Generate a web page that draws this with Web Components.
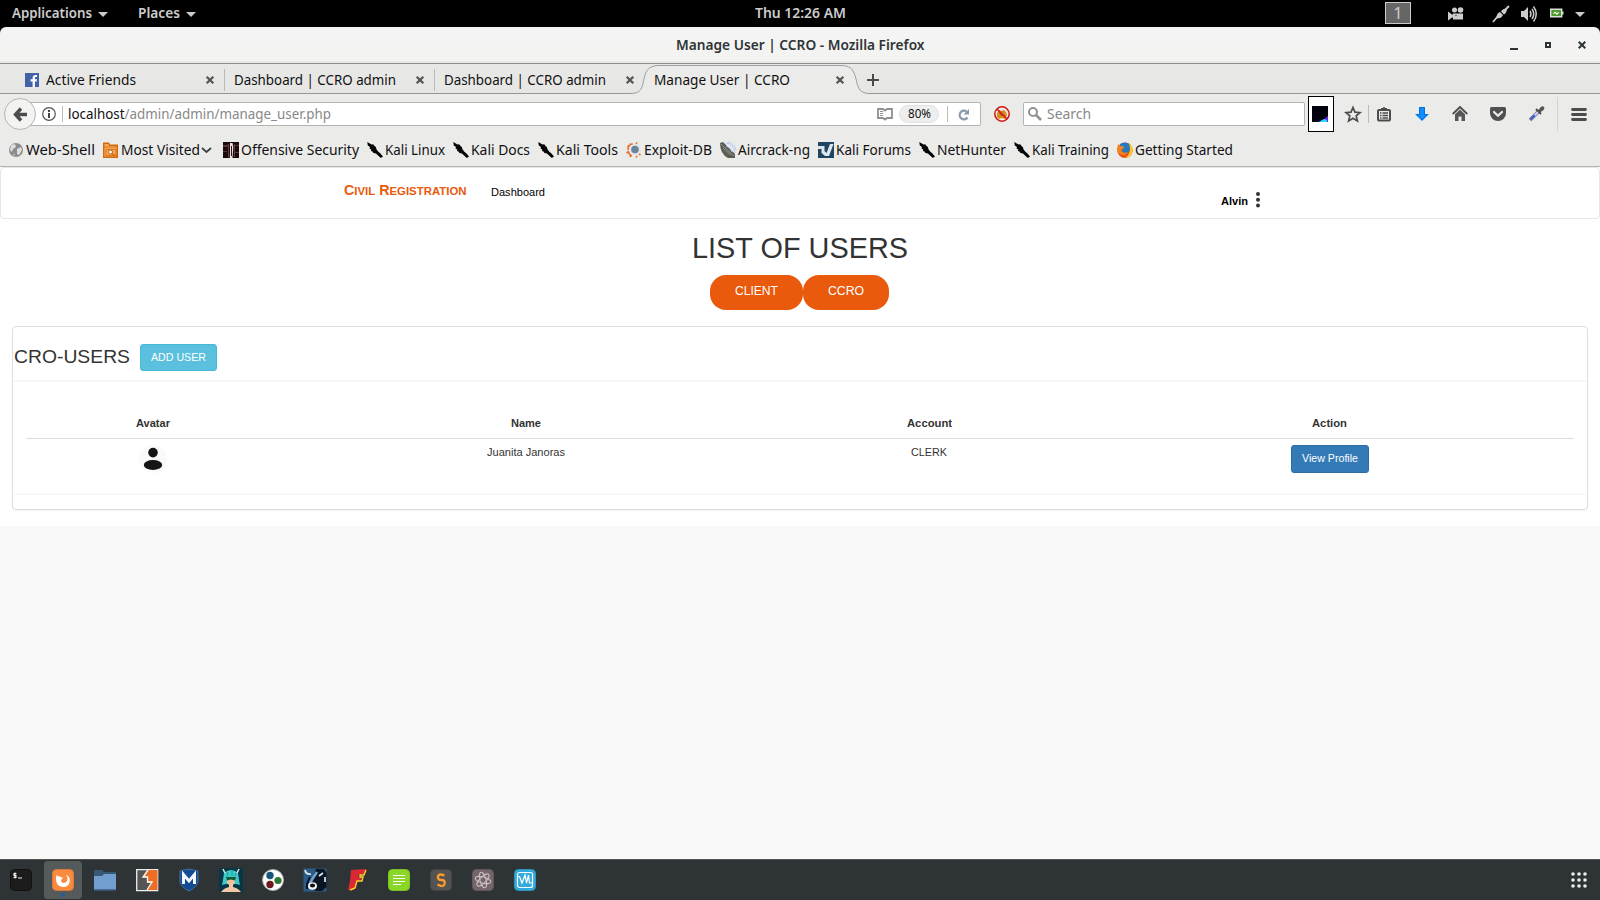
<!DOCTYPE html>
<html lang="en">
<head>
<meta charset="utf-8">
<title>Manage User | CCRO</title>
<style>
html,body{margin:0;height:100%;overflow:hidden;background:#000}
body{font-family:"Noto Sans","Open Sans",sans-serif;font-size:14px}
</style>
</head>
<body>
<desk-top></desk-top>
<script>
const ICONS = {
  down: '<path d="M0 4h10L5 9z" fill="#ccc"/>',
  camera: '<circle cx="6.500" cy="3" r="2.500" fill="#ccc"/><circle cx="12.500" cy="3" r="2.800" fill="#ccc"/><path d="M0 4.500 4 7.500h1V6.500h10v6H5V10.500H4L0 13.500z" fill="#ccc"/><circle cx="8" cy="8.500" r=".8" fill="#555"/>',
  plug: '<path d="M0 16 5 10 M16 0 12 4" stroke="#ccc" stroke-width="1.800"/><path d="M3.500 12.500c0-4 1-5.500 3.500-6.500l3 3c-1 2.500-3 3.500-6.500 3.500z M8 5.500l3 3c2-1 2.800-3 3-6-3 .2-5 1-6 3z" fill="#ccc"/>',
  volume: '<path d="M0 5h3l4-4v14l-4-4H0z" fill="#ccc"/><path d="M9 5q2 3 0 6M11 3q3.500 5 0 10M12.500 .5q5.500 7.500 0 15" fill="none" stroke="#ccc" stroke-width="1.500"/>',
  battery: '<path d="M.7 1.200h11v7.600H.7z" fill="#4e9a2a" stroke="#ddd" stroke-width="1.400"/><path d="M12 3.500h1.500v3H12z" fill="#ddd"/><path d="m2.500 5.500 3-2 1 1.500 3-1-2.500 3-1.500-1.500z" fill="#fff"/>',
  min: '<path d="M0 8h8v2H0z" fill="#2e3436"/>',
  max: '<path d="M1 1h4v4H1z" fill="none" stroke="#2e3436" stroke-width="2"/>',
  close: '<path d="m.7.700 6.600 6.600M7.300.700.700 7.300" stroke="#2e3436" stroke-width="2"/>',
  tabclose: '<path d="m.7.700 6.600 6.600M7.300.700.700 7.300" stroke="#555753" stroke-width="2.300"/>',
  plus: '<path d="M6 0v12M0 6h12" stroke="#4b4b4b" stroke-width="2"/>',
  facebook: '<path d="M0 0h14v14H0z" fill="#4261a6"/><path d="M7.600 14V8.500H5.500V6.300h2.100V5c0-2 1.200-3 3-3H12v2.100h-1.100c-.7 0-1 .4-1 1v1.200H12l-.3 2.200H9.900V14z" fill="#fff"/>',
  back: '<path d="M8 1.500 2.500 7.500 8 13.500M3 7.500h11" fill="none" stroke="#4c4c4c" stroke-width="3.400"/>',
  info: '<circle cx="7" cy="7" r="6.300" fill="none" stroke="#555" stroke-width="1.200"/><path d="M6 3h2v2H6zM6 6h2v5H6z" fill="#444"/>',
  reader: '<path d="M1 1h5l2 1.500L10 1h5v9h-5l-2 1.500L6 10H1z" fill="none" stroke="#8f8f8f" stroke-width="1.800"/><path d="M3 3.500h3M3 5.500h3M3 7.500h3" stroke="#8f8f8f"/>',
  reload: '<path d="M9.500 8.500A4.300 4.300 0 1 1 8.500 2.500" fill="none" stroke="#8a9aab" stroke-width="2.300"/><path d="M11 0v5.500H5.500z" fill="#8a9aab"/>',
  blocked: '<path d="M3 7l2-3 2 1 3-1 2 2 1 3-2 4-3-1-3 1-2-2z" fill="#df8a16"/><path d="m5 5 2 4 4 1" stroke="#7c4d10" fill="none"/><circle cx="8" cy="8" r="7.200" fill="none" stroke="#d01515" stroke-width="1.500"/><path d="m3 3 10 10" stroke="#d01515" stroke-width="1.500"/>',
  search: '<circle cx="5" cy="5" r="4" fill="none" stroke="#929292" stroke-width="2"/><path d="m8 8 5 5" stroke="#929292" stroke-width="2.600"/>',
  space: '<path d="M0 0h16v16H0z" fill="#02020f"/><path d="M16 10v6H6l6-3z" fill="#6d22e8"/><path d="m7 16 5-3 3 1v2z" fill="#21dfff"/>',
  star: '<path d="m8 1.500 2 4.600 5 .5-3.800 3.300L12.400 15 8 12.300 3.600 15l1.200-5.100L1 6.600l5-.5z" fill="none" stroke="#4c4c4c" stroke-width="1.700"/>',
  clip: '<rect x="1" y="3" width="12" height="10.500" rx="1" fill="none" stroke="#4c4c4c" stroke-width="2"/><path d="M4 3V1h2Q7-1.500 8 1h2v2z" fill="#4c4c4c"/><path d="M3 6h1.500M3 8.500h1.500M3 11h1.500M5.500 6H11M5.500 8.500H11M5.500 11H11" stroke="#4c4c4c" stroke-width="1.300"/>',
  download: '<path d="M4 0h6v7h4l-7 7-7-7h4z" fill="#0f8cff"/><path d="M4.500.5h5v7h3L7 13 1.500 7.500h3z" fill="none" stroke="#0b70d4"/>',
  home: '<path d="M.7 8 8 1l7.300 7" fill="none" stroke="#4c4c4c" stroke-width="1.800"/><path d="M3 8.300 8 3.600l5 4.700V15H9.500v-4.500h-3V15H3z" fill="#565656"/>',
  pocket: '<path d="M1.500 0h13Q16 0 16 1.500V6A8 8 0 0 1 0 6V1.500Q0 0 1.500 0z" fill="#505050"/><path d="m4 5 4 3.800L12 5" fill="none" stroke="#ebebea" stroke-width="2.200" stroke-linecap="round"/>',
  dropper: '<path d="m1 14 8-8" stroke="#777" stroke-width="3.500"/><path d="m2 13 7-7" stroke="#c9d8ff" stroke-width="2"/><path d="m1.700 13.300 4-4" stroke="#3857d6" stroke-width="2"/><path d="m7 3 5 5" stroke="#4a4a4a" stroke-width="2"/><path d="M8.500 5 12 .8q2-1.200 3 .2t-.5 3L10.500 7z" fill="#555"/>',
  menu: '<path d="M1.500 1.500h13M1.500 6.500h13M1.500 11.500h13" stroke="#4c4c4c" stroke-width="2.800" stroke-linecap="round"/>',
  globe: '<circle cx="8" cy="8" r="7" fill="#8b8b8b"/><path d="m3 3 4-1 1 3-3 2-1 3-2-2zM9 7l4-2 1 3-3 5-2-1zM5 11l2 2-1 1z" fill="#dedede"/>',
  folder: '<path d="M.7 1.200h5l1 2h7.600v12H.7z" fill="#f5a85a" stroke="#cf6a0d" stroke-width="1.400"/><path d="M.7 5h13.600M3 7.500h10v6H3z" fill="none" stroke="#d8781d"/><circle cx="7.500" cy="10" r="2" fill="#fff" stroke="#c9640a"/><path d="m9 11.500 3 2.500" stroke="#c9640a" stroke-width="1.300"/>',
  chevron: '<path d="m1 3 4.500 4L10 3" fill="none" stroke="#3c4348" stroke-width="1.800"/>',
  offsec: '<path d="M0 0h16v16H0z" fill="#1b0b0c"/><path d="M0 3h5v2H0zM11 3h5v1h-5zM0 9h4v1H0zM12 10h4v1h-4z" fill="#5b3032"/><path d="M7 1h2.500l.8 4-.8 11H6.800l.2-6z" fill="#e8e2e2"/><path d="M8 4h1v10H8z" fill="#2a1617"/><path d="M5 2h1v13H5zM11 2h1v13h-1z" fill="#6b3a3c"/>',
  kali: '<path d="M.3 0 4.500 2.500 6.200 2.300 7.500 4l1.300 1 .8 2.500 2 2.500 1.400 1 3 3.500L13.800 16 10.500 13 9 11.500 6.500 11 5.500 9.500 4 9l.3-1.500L2.500 6.500 3 5 .8 3.500z" fill="#050505"/>',
  exploit: '<path d="M3 5 1.500 4M5 3 4 1.500M10 2l1-1.500M2 10l-1.500 1M5 13l-1 2M13 12l1.500 1M10 14l1 1.500M2 8Q2 2 7 2M2 9q1 4 4 5" stroke="#ee6b2a" fill="none" stroke-width="1.600"/><circle cx="9" cy="7.500" r="5.500" fill="#dbe6ee"/><circle cx="9" cy="7.500" r="3.800" fill="#6b8496"/>',
  aircrack: '<path d="M0 1 3 0l12 12v4H8Q0 12 0 1z" fill="#5b5d55"/><path d="m1 2 13 12M3 6l8 7" stroke="#92938b"/><path d="M6 1q8 1 9 10M8 0q7 2 8 8M6 4q5 1 6 6" fill="none" stroke="#b8caf5"/>',
  forum: '<path d="M0 0h16v16H0z" fill="#1f4560"/><path d="M0 4h6.500v5l2 2L12 2h3.500L11 14H7L3.500 11V7H0z" fill="#dce6ec"/>',
  firefox: '<circle cx="8" cy="8.300" r="7.700" fill="#e8521c"/><path d="M12 1q4 3 3.700 7.500Q15 15 8 16q5-3 5-9z" fill="#ffc928"/><path d="M3 2Q8-1 12 2l1 5q-1 5-6 4L3 6z" fill="#237bc4"/><path d="m0 7 1-5 2 2h3l1 2-3 2q1 4 7 2-3 5-8 2-3-1-3-5z" fill="#f58220"/>',
  avatar: '<circle cx="14" cy="14" r="14" fill="#fafafa"/><circle cx="14" cy="7.600" r="4.800" fill="#151515"/><ellipse cx="14" cy="20" rx="9.200" ry="5" fill="#151515"/>',
  dots: '<g fill="#333"><circle cx="2" cy="2" r="2"/><circle cx="2" cy="7.800" r="2"/><circle cx="2" cy="13.500" r="2"/></g>',
  term: '<rect x=".5" y=".5" width="21" height="21" rx="4" fill="#1c1c1c" stroke="#111"/><path d="M6.500 4.500H4v2h2v2H3.500M5 3.500v6M8 9h4" fill="none" stroke="#eee" stroke-width="1.100"/>',
  ff: '<rect x=".5" y=".5" width="21" height="21" rx="4" fill="#f98b40" stroke="#e27830"/><path d="M4.500 6q1.500 1.500 3.500 1.500l3 1.500-2 2q0 3 3 3 4-1 3.500-5L14 5.500q4 2 3.800 6.500-.8 6-6.800 6-7-.5-7-8z" fill="#fff"/>',
  files: '<path d="M0 1h8l2 2h12v6H0z" fill="#375873"/><path d="M0 7h8l2-2h12v16H0z" fill="#729dcf"/><path d="M0 20h22v1.500H0z" fill="#486b9a"/>',
  burp: '<path d="M.7.700h21v21H.7z" fill="#555" stroke="#eee" stroke-width="1.300"/><path d="M12 1h9.500v20H11l5-7h-5l1-5-5-1z" fill="#ee6d24"/><path d="M12 1 7 8h4.500v5H16l-5 8" fill="none" stroke="#fff" stroke-width="1.300"/>',
  msf: '<path d="M2 2q4-1 9-2 5 1 9 2v11q-1 5-9 9-8-4-9-9z" fill="#134a91" stroke="#3e739f"/><path d="M5.500 15V5.500L11 12l5.500-6.500V15" fill="none" stroke="#f3f6fc" stroke-width="3"/>',
  armitage: '<path d="M0 0h24v24H0z" fill="#073647"/><path d="M5 5q7-6 14 0l1 7 1 5-4-1H7l-4 1 1-5z" fill="#3ccbc6"/><path d="M8 11h8v4l-3 3h-2l-3-3z" fill="#f1c19c"/><path d="M2 24q3-4 8-5v-3h4v3q5 1 8 5z" fill="#f3c7a3"/><path d="M7 9h10l-1 3.500-4-1-4 1z" fill="#115c35"/><path d="M9 4 8 8M13 3v5M17 5l-1 3" stroke="#1a9a9c"/><path d="m4 1 2 4M20 1l-2 4" stroke="#ddd" stroke-width="1.600"/>',
  tri: '<circle cx="11" cy="11" r="10.500" fill="#fff" stroke="#aaa"/><circle cx="8" cy="6.500" r="3.700" fill="#155778"/><circle cx="16" cy="11.500" r="3.600" fill="#2c7631"/><circle cx="8" cy="15.500" r="3.700" fill="#701820"/>',
  bull: '<path d="M-.5-.5h23v23h-23z" fill="#2b5c87"/><path d="M12 0h8l2.500 4v14L18 22h-6L5 18l3-7z" fill="#091522"/><path d="M1 1q1 5 6 4M15 7l4-3M21 8v5" stroke="#dbe7f0" fill="none" stroke-width="1.700"/><path d="M6 8 3 15v5" stroke="#091522" stroke-width="2" fill="none"/><path d="M13 3 9 9l-3 5" stroke="#6fa3cd" stroke-width="2.500" fill="none"/><ellipse cx="8.500" cy="17" rx="4.500" ry="3.700" fill="#f2f4f6"/><ellipse cx="8.500" cy="16.500" rx="2.600" ry="1.900" fill="#111"/>',
  flash: '<path d="m3 1 15-1-2 5h-5l-1 3h4l-2 4H9l-3 9H0l2-9z" fill="#dc2831"/><path d="m18 1-2 5h-4v2h3l-1 4H9l-2 7-5 2" fill="none" stroke="#ffd02b" stroke-width="1.400"/>',
  note: '<rect x=".5" y=".5" width="21" height="21" rx="4" fill="#8bd727" stroke="#7cc41e"/><path d="M5 6.500h12M5 9.500h12M5 12.500h12M5 15.500h8" stroke="#fff" stroke-width="1.200"/>',
  sublime: '<rect x=".5" y=".5" width="21" height="21" rx="4" fill="#535353" stroke="#444"/><path d="M14.500 6.500Q8.500 4 8 7.500t3.500 3.500 3 4-7 .5" fill="none" stroke="#ff9b28" stroke-width="2.400"/>',
  atom: '<rect x=".5" y=".5" width="21" height="21" rx="4" fill="#74656a" stroke="#65575c"/><g fill="none" stroke="#c9bfc3"><ellipse cx="11" cy="11" rx="8" ry="3" transform="rotate(15 11 11)"/><ellipse cx="11" cy="11" rx="8" ry="3" transform="rotate(75 11 11)"/><ellipse cx="11" cy="11" rx="8" ry="3" transform="rotate(135 11 11)"/></g>',
  wave: '<rect x=".5" y=".5" width="21" height="21" rx="4" fill="#33a9dc" stroke="#2997c8"/><rect x="3.500" y="3.500" width="15" height="15" rx="2" fill="none" stroke="#fff" stroke-width="1.200"/><path d="M4 7.500h1.500L8 14l3-8 1.500 8 2-8 1 8h3" fill="none" stroke="#fff" stroke-width="1.200"/>',
  apps: '<g fill="#eee"><circle cx="2" cy="2" r="1.800"/><circle cx="8" cy="2" r="1.800"/><circle cx="14" cy="2" r="1.800"/><circle cx="2" cy="8" r="1.800"/><circle cx="8" cy="8" r="1.800"/><circle cx="14" cy="8" r="1.800"/><circle cx="2" cy="14" r="1.800"/><circle cx="8" cy="14" r="1.800"/><circle cx="14" cy="14" r="1.800"/></g>'
};

const define = (tag, html) => customElements.define(tag, class extends HTMLElement {
  constructor() { super(); this.attachShadow({mode: 'open'}).innerHTML = html; }
});

/* Vector icon: name, w, h */
customElements.define('ui-icon', class extends HTMLElement {
  connectedCallback() {
    if (this.shadowRoot) return;
    const w = this.getAttribute('w') || 16, h = this.getAttribute('h') || w;
    this.attachShadow({mode: 'open'}).innerHTML =
      `<style>:host{display:block;flex:none;width:${w}px;height:${h}px}svg{display:block;overflow:visible}</style>
       <svg width="${w}" height="${h}" viewBox="0 0 ${w} ${h}">${ICONS[this.getAttribute('name')]}</svg>`;
  }
});

/* Single-line label condensed or widened to the width w */
customElements.define('ui-text', class extends HTMLElement {
  connectedCallback() {
    if (this.shadowRoot) return;
    const w = +this.getAttribute('w');
    const root = this.attachShadow({mode: 'open'});
    root.innerHTML = `<style>:host{display:block;flex:none;width:${w}px;white-space:nowrap}
      span{display:inline-block;transform-origin:0 50%}</style><span><slot></slot></span>`;
    const s = root.querySelector('span'), real = s.getBoundingClientRect().width;
    if (real) s.style.transform = `scaleX(${w / real})`;
  }
});

define('top-bar', `<style>
:host{display:flex;align-items:center;height:27px;background:#000;color:#ccc;position:relative;font-weight:600;line-height:25px}
ui-text{height:27px}
.c{position:absolute;left:755px;top:0}
.ws{margin:-1px 0 0 1190px;box-sizing:border-box;width:26px;height:22px;border:1px solid #ccc;background:#666;display:flex;justify-content:center;line-height:19px;font-weight:400;font-size:16.5px;color:#ccc}
</style>
<ui-text w="80" style="margin-left:12px">Applications</ui-text><ui-icon name="down" w="10" h="12" style="margin-left:6px"></ui-icon>
<ui-text w="42" style="margin-left:30px">Places</ui-text><ui-icon name="down" w="10" h="12" style="margin-left:6px"></ui-icon>
<ui-text class="c" w="91">Thu 12:26 AM</ui-text>
<div class="ws" style="margin-left:1189px">1</div>
<ui-icon name="camera" w="16" h="14" style="margin-left:37px"></ui-icon>
<ui-icon name="plug" style="margin-left:29px"></ui-icon>
<ui-icon name="volume" style="margin-left:12px"></ui-icon>
<ui-icon name="battery" w="14" h="11" style="margin-left:13px"></ui-icon>
<ui-icon name="down" w="10" h="12" style="margin-left:11px"></ui-icon>`);

define('title-bar', `<style>
:host{display:flex;box-sizing:border-box;align-items:center;height:37px;background:linear-gradient(#f4f4f4,#f3f3f2 33px,#e4e4e2);border-bottom:1px solid #8f8f8a;border-radius:6px 6px 0 0;color:#2e3436;font-weight:600;padding-left:676px;line-height:34px}
</style><ui-text w="248.500">Manage User | CCRO - Mozilla Firefox</ui-text>
<ui-icon name="min" w="8" h="10" style="margin-left:585.500px"></ui-icon>
<ui-icon name="max" w="6" h="6" style="margin-left:27px"></ui-icon>
<ui-icon name="close" w="8" h="8" style="margin-left:27px"></ui-icon>`);

define('browser-tab', `<style>
:host{display:flex;box-sizing:border-box;width:210px;height:30px;align-items:center;padding-left:10px;position:relative;line-height:30px}
:host([sep])::after{content:"";position:absolute;right:-1px;top:5px;height:22px;width:1px;background:#b9b9b6}
.x{margin:2px 10px 0 auto;position:relative}
.shape{display:none;position:absolute;left:-14px;top:0}
:host([active]) .shape{display:block}
.l{position:relative;display:flex;align-items:center;padding-top:2px}
::slotted(ui-icon){margin-right:7px}
</style>
<svg class="shape" width="240" height="31"><path d="M0 31V29.500C11 29.500 12 25 14 15 16 4 21 1.500 30 1.500H210C220 1.500 223 4 226 15 228 25 230 29.500 240 29.500V31z" fill="#ebebea"/><path d="M0 29.500C11 29.500 12 25 14 15 16 4 21 1.500 30 1.500H210C220 1.500 223 4 226 15 228 25 230 29.500 240 29.500" fill="none" stroke="#9b9fa2"/></svg>
<div class="l"><slot></slot></div><ui-icon class="x" name="tabclose" w="8"></ui-icon>`);

define('tab-strip', `<style>
:host{display:flex;box-sizing:border-box;height:30px;background:linear-gradient(#e8e8e6,#e6e6e5);box-shadow:inset 0 -1px #979792;padding-left:14px;color:#111}
.plus{margin:10px 0 0 13px}
</style>
<browser-tab sep><ui-icon name="facebook" w="14" style="margin-left:1px"></ui-icon><ui-text w="90">Active Friends</ui-text></browser-tab>
<browser-tab sep><ui-text w="162">Dashboard | CCRO admin</ui-text></browser-tab>
<browser-tab><ui-text w="162">Dashboard | CCRO admin</ui-text></browser-tab>
<browser-tab active><ui-text w="136">Manage User | CCRO</ui-text></browser-tab>
<ui-icon class="plus" name="plus" w="12"></ui-icon>`);

define('nav-bar', `<style>
:host{display:flex;align-items:center;height:40px;background:#ebebea;padding-left:4px;color:#111;line-height:22px}
.back{box-sizing:border-box;width:32px;height:32px;border:1px solid #b4b4b2;border-radius:50%;background:#f3f3f2;display:flex;align-items:center;justify-content:center;position:relative;z-index:1}
.box{box-sizing:border-box;height:24px;border:1px solid #b4b4b0;border-radius:2px;background:#fff;display:flex;align-items:center}
.url{width:961px;margin-left:-16px;padding-left:21px}
.s{width:1px;background:#bbb}
i{font-style:normal;color:#888}
.pill{margin-left:6px;width:40px;height:18px;box-sizing:border-box;border-radius:9px;background:#eee;border:1px solid #e2e2e2;font-size:12px;line-height:16px;display:flex;justify-content:center}
.search{width:282px;margin-left:13px;padding-left:4px;color:#888}
.sel{box-sizing:border-box;width:26px;height:36px;border:1px solid #000;background:#fff;display:flex;align-items:center;padding-left:3px;margin-left:3px}
</style>
<div class="back"><ui-icon name="back" w="15"></ui-icon></div>
<div class="box url"><ui-icon name="info" w="14"></ui-icon><div class="s" style="height:16px;margin:0 5px 0 6px"></div><ui-text w="263">localhost<i>/admin/admin/manage_user.php</i></ui-text>
<ui-icon name="reader" w="16" h="12" style="margin-left:546px"></ui-icon><div class="pill"><ui-text w="23">80%</ui-text></div><div class="s" style="height:16px;margin:0 10px 0 8px"></div><ui-icon name="reload" w="11"></ui-icon></div>
<ui-icon name="blocked" style="margin-left:13px"></ui-icon>
<div class="box search"><ui-icon name="search" w="14"></ui-icon><ui-text w="44" style="margin-left:5px">Search</ui-text></div>
<div class="sel"><ui-icon name="space"></ui-icon></div>
<ui-icon name="star" style="margin-left:11px"></ui-icon><div class="s" style="height:18px;margin:0 8px 0 7px"></div>
<ui-icon name="clip" w="14"></ui-icon><ui-icon name="download" w="14" style="margin-left:24px"></ui-icon>
<ui-icon name="home" style="margin-left:23px"></ui-icon><ui-icon name="pocket" w="16" h="14" style="margin-left:22px"></ui-icon>
<ui-icon name="dropper" style="margin-left:23px"></ui-icon><div class="s" style="height:34px;margin:0 13px 0 12px;background:#d2d2d0"></div><ui-icon name="menu" w="16" h="13"></ui-icon>`);

define('book-mark', `<style>:host{display:flex;flex:none;align-items:center;gap:2px;line-height:26px}</style><slot></slot>`);

define('bookmark-bar', `<style>
:host{display:flex;box-sizing:border-box;align-items:center;gap:8px;height:33px;background:#ebebea;border-bottom:1px solid #b2b2ae;padding:0 0 1px 8px;color:#111}
</style>
<book-mark><ui-icon name="globe"></ui-icon><ui-text w="69">Web-Shell</ui-text></book-mark>
<book-mark><ui-icon name="folder"></ui-icon><ui-text w="79">Most Visited</ui-text><ui-icon name="chevron" w="11" h="10" style="margin-left:-1px;margin-right:1px"></ui-icon></book-mark>
<book-mark><ui-icon name="offsec" style="margin-left:2px"></ui-icon><ui-text w="118">Offensive Security</ui-text></book-mark>
<book-mark><ui-icon name="kali"></ui-icon><ui-text w="60">Kali Linux</ui-text></book-mark>
<book-mark><ui-icon name="kali"></ui-icon><ui-text w="59">Kali Docs</ui-text></book-mark>
<book-mark><ui-icon name="kali"></ui-icon><ui-text w="62">Kali Tools</ui-text></book-mark>
<book-mark><ui-icon name="exploit"></ui-icon><ui-text w="68">Exploit-DB</ui-text></book-mark>
<book-mark><ui-icon name="aircrack"></ui-icon><ui-text w="72">Aircrack-ng</ui-text></book-mark>
<book-mark><ui-icon name="forum"></ui-icon><ui-text w="75">Kali Forums</ui-text></book-mark>
<book-mark><ui-icon name="kali"></ui-icon><ui-text w="69">NetHunter</ui-text></book-mark>
<book-mark><ui-icon name="kali"></ui-icon><ui-text w="77">Kali Training</ui-text></book-mark>
<book-mark><ui-icon name="firefox"></ui-icon><ui-text w="98">Getting Started</ui-text></book-mark>`);

define('site-nav', `<style>
:host{display:flex;box-sizing:border-box;height:52px;border:1px solid #e7e7e7;border-radius:4px;background:#fff;padding-left:343px;color:#000;font-size:11.2px;line-height:16px}
.b{color:#e95a0c;font-weight:700;font-size:14.4px;margin-top:14px}
small{font-size:.8em;text-transform:uppercase}
</style><ui-text class="b" w="122.500">C<small>ivil</small> R<small>egistration</small></ui-text><ui-text w="54" style="margin:16px 0 0 24.500px">Dashboard</ui-text>
<ui-text w="27" style="margin:25px 0 0 676px;font-weight:700">Alvin</ui-text><ui-icon name="dots" w="4" h="16" style="margin:24px 0 0 8px"></ui-icon>`);

define('pill-button', `<style>
:host{display:flex;box-sizing:border-box;height:35px;padding:8px 25px 0;border-radius:16px;background:#e95a0c;color:#fff;font-size:12px;line-height:17px}
</style><slot></slot>`);

define('ui-button', `<style>
:host{display:inline-flex;box-sizing:border-box;padding:0 10px;border:1px solid var(--line);border-radius:3px;background:var(--fill);color:#fff;font-size:11.2px;height:var(--h,27px);line-height:25px}
</style><slot></slot>`);

define('users-panel', `<style>
:host{display:block;box-sizing:border-box;height:184px;margin:16px 12px 0;border:1px solid #ddd;border-radius:4px;box-shadow:0 1px 1px rgba(0,0,0,.05);padding:0 1px;font-size:11.2px}
.head{display:flex;height:55px;box-sizing:border-box;padding-top:17px;border-bottom:2px solid #f6f6f6}
h3{margin:0 10px 0 0;font-size:19.2px;font-weight:400;line-height:25px}
table{border-collapse:collapse;table-layout:fixed;width:1548px;margin:33px 0 0 12px;text-align:center}
th{height:15px;padding:0 0 8px;line-height:14px;border-bottom:1px solid #ddd}
td{padding:6px 0 0;height:48px;vertical-align:top;line-height:14px}
th ui-text,td ui-text,td ui-icon{margin:0 auto;text-align:left}
ui-button ui-text{margin:0}
.foot{border-top:2px solid #f7f7f7}
</style>
<div class="head"><h3><ui-text w="116">CRO-USERS</ui-text></h3><ui-button style="--fill:#5bc0de;--line:#46b8da"><ui-text w="55">ADD USER</ui-text></ui-button></div>
<table><colgroup><col style="width:254px"><col style="width:492px"><col style="width:314px"><col style="width:488px"></colgroup>
<tr><th><ui-text w="34">Avatar</ui-text></th><th><ui-text w="30">Name</ui-text></th><th><ui-text w="45">Account</ui-text></th><th><ui-text w="35" style="padding-right:1px">Action</ui-text></th></tr>
<tr><td><ui-icon name="avatar" w="28"></ui-icon></td><td><ui-text w="78">Juanita Janoras</ui-text></td><td><ui-text w="36">CLERK</ui-text></td><td><ui-button style="--fill:#337ab7;--line:#2e6da4;--h:28px"><ui-text w="56">View Profile</ui-text></ui-button></td></tr></table>
<div class="foot"></div>`);

define('site-page', `<style>
:host{display:block;height:692px;background:#f9f9f9;font-family:"Liberation Sans",Arial,sans-serif;color:#333}
main{height:359px;background:#fff;display:flow-root}
h1{margin:12px 0 0;font-size:28.8px;font-weight:400;line-height:34px;display:flex;justify-content:center}
.b{display:flex;justify-content:center;margin:10px 2px 0 0}
</style><main><site-nav></site-nav><h1><ui-text w="216">LIST OF USERS</ui-text></h1>
<div class="b"><pill-button><ui-text w="43">CLIENT</ui-text></pill-button><pill-button><ui-text w="36">CCRO</ui-text></pill-button></div>
<users-panel></users-panel></main>`);

define('dock-item', `<style>:host{display:flex;position:relative;flex:none;width:38px;height:38px;border-radius:4px;align-items:center;justify-content:center}
:host([on]){background:#555a5a}:host([on])::after{content:"";position:absolute;left:17px;bottom:2px;width:4px;height:4px;border-radius:2px;background:#215d9c}</style><slot></slot>`);

define('app-dock', `<style>
:host{display:flex;box-sizing:border-box;align-items:center;gap:4px;height:41px;background:#2e3436;border-top:1px solid #50554f;padding:0 13px 0 2px}
.apps{margin-left:auto}
</style>${['term','ff','files','burp','msf','armitage','tri','bull','flash','note','sublime','atom','wave'].map(n =>
  `<dock-item${n === 'ff' ? ' on' : ''}><ui-icon name="${n}" w="${n === 'armitage' ? 24 : n === 'flash' ? 18 : 22}" h="${n === 'armitage' ? 24 : 22}"></ui-icon></dock-item>`).join('')}
<ui-icon class="apps" name="apps"></ui-icon>`);

define('desk-top', `<style>:host{display:flex;flex-direction:column;width:1600px;height:900px}:host>*{flex:none}</style>
<top-bar></top-bar><title-bar></title-bar><tab-strip></tab-strip><nav-bar></nav-bar><bookmark-bar></bookmark-bar><site-page></site-page><app-dock></app-dock>`);
</script>
</body>
</html>
